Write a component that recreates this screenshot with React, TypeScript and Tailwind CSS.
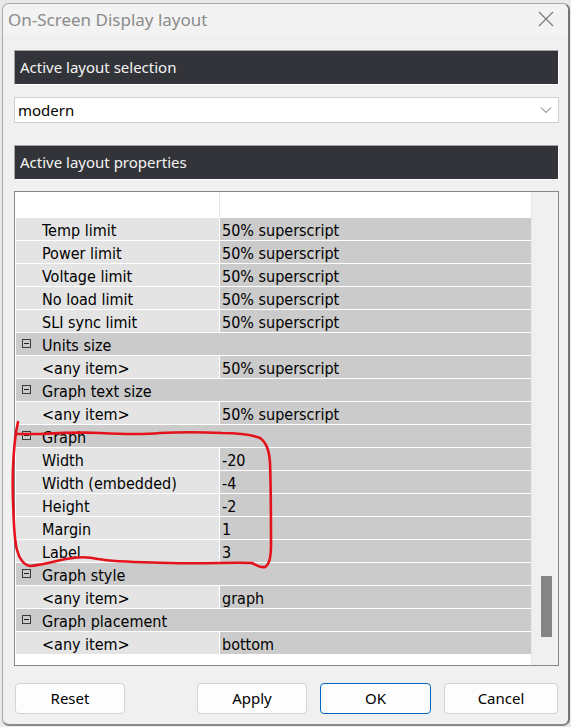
import React from "react";

type Row =
  | { kind: "group"; label: string }
  | { kind: "item"; label: string; value: string };

const rows: Row[] = [
  { kind: "item", label: "Temp limit", value: "50% superscript" },
  { kind: "item", label: "Power limit", value: "50% superscript" },
  { kind: "item", label: "Voltage limit", value: "50% superscript" },
  { kind: "item", label: "No load limit", value: "50% superscript" },
  { kind: "item", label: "SLI sync limit", value: "50% superscript" },
  { kind: "group", label: "Units size" },
  { kind: "item", label: "<any item>", value: "50% superscript" },
  { kind: "group", label: "Graph text size" },
  { kind: "item", label: "<any item>", value: "50% superscript" },
  { kind: "group", label: "Graph" },
  { kind: "item", label: "Width", value: "-20" },
  { kind: "item", label: "Width (embedded)", value: "-4" },
  { kind: "item", label: "Height", value: "-2" },
  { kind: "item", label: "Margin", value: "1" },
  { kind: "item", label: "Label", value: "3" },
  { kind: "group", label: "Graph style" },
  { kind: "item", label: "<any item>", value: "graph" },
  { kind: "group", label: "Graph placement" },
  { kind: "item", label: "<any item>", value: "bottom" },
];

const uiFont = { fontFamily: '"Noto Sans", "Open Sans", sans-serif' };
const gridFont = {
  fontFamily: '"DejaVu Sans Condensed", "DejaVu Sans", sans-serif',
  fontStretch: "condensed" as const,
};

function SectionBar({ title }: { title: string }) {
  return (
    <div className="ml-[11px] w-[545px] h-[35px] flex items-center pl-[5px] bg-[#333439] border-t border-l border-[#a3a3a3] border-r border-r-white border-b border-b-white">
      <span className="text-[15px] text-[#f4f4f4]" style={uiFont}>
        {title}
      </span>
    </div>
  );
}

function MinusBox() {
  return (
    <span className="w-[9px] h-[9px] border border-[#3a3a3a] flex items-center justify-center">
      <span className="w-[5px] h-[1px] bg-[#222]" />
    </span>
  );
}

function Button({ label, primary, w }: { label: string; primary?: boolean; w: string }) {
  return (
    <button
      className={`${w} h-[31px] rounded-[4px] bg-[#fdfdfd] text-[15px] text-black flex items-center justify-center ${
        primary ? "border border-[#0067c0]" : "border border-[#d3d3d3]"
      }`}
      style={uiFont}
    >
      {label}
    </button>
  );
}

export default function App() {
  return (
    <div className="w-[571px] h-[727px] relative overflow-hidden bg-[#e9e9e9] pt-[3px] pl-[2px] pr-[1px] pb-[1px]">
      <div className="h-full flex flex-col bg-[#f0f0f0] rounded-[7px] border-l border-t border-[#a9a9a9] border-r-[2px] border-b-[2px] border-r-[#747474] border-b-[#8a8a8a]">
        {/* title bar */}
        <div className="h-[31px] flex items-center justify-between pl-[5px] pr-[14px] bg-[#f3f3f3] rounded-t-[7px]">
          <span className="text-[17px] text-[#8b8b8b]" style={uiFont}>
            On-Screen Display layout
          </span>
          <svg width="16" height="16" viewBox="0 0 16 16" className="mt-[-1px]">
            <path d="M1 1 L15 15 M15 1 L1 15" stroke="#7a7a7a" strokeWidth="1.2" fill="none" />
          </svg>
        </div>

        <div className="mt-[15px]">
          <SectionBar title="Active layout selection" />
        </div>

        {/* combo */}
        <div className="mt-[12px] ml-[11px] w-[545px] h-[26px] bg-white border border-[#cfcfcf] flex items-center justify-between pl-[3px] pr-[6px]">
          <span className="text-[15px] text-black" style={uiFont}>
            modern
          </span>
          <svg width="12" height="8" viewBox="0 0 12 8">
            <path d="M1 1.5 L6 6.5 L11 1.5" stroke="#666" strokeWidth="1" fill="none" />
          </svg>
        </div>

        <div className="mt-[22px]">
          <SectionBar title="Active layout properties" />
        </div>

        {/* property grid */}
        <div className="mt-[11px] ml-[11px] w-[545px] h-[475px] border border-[#838790] bg-white flex">
          <div className="w-[516px] pl-[1px] flex flex-col" style={gridFont}>
            <div className="h-[26px] flex">
              <div className="w-[203px]" />
              <div className="w-[1px] bg-[#e6e6e6]" />
            </div>
            {rows.map((r, i) =>
              r.kind === "group" ? (
                <div key={i} className="h-[22px] mb-[1px] bg-[#cbcbcb] flex items-start pt-[5px]">
                  <span className="ml-[6px] mr-[11px] mt-[1px]">
                    <MinusBox />
                  </span>
                  <span className="text-[16px] text-black leading-none">{r.label}</span>
                </div>
              ) : (
                <div key={i} className="h-[22px] mb-[1px] flex">
                  <div className="w-[203px] bg-[#e4e4e4] flex items-start pt-[5px] pl-[26px]">
                    <span className="text-[16px] text-black leading-none">{r.label}</span>
                  </div>
                  <div className="w-[1px] bg-white" />
                  <div className="flex-1 bg-[#cbcbcb] flex items-start pt-[5px] pl-[2px]">
                    <span className="text-[16px] text-black leading-none">{r.value}</span>
                  </div>
                </div>
              )
            )}
          </div>
          <div className="w-[1px] bg-[#e8e8e8]" />
          {/* scrollbar */}
          <div className="flex-1 bg-[#f0f0f0] flex flex-col items-center">
            <div className="mt-[384px] w-[11px] h-[61px] bg-[#858585] ml-[2px]" />
          </div>
        </div>

        {/* buttons */}
        <div className="mt-[17px] ml-[12px] w-[543px] flex justify-between">
          <Button label="Reset" w="w-[110px]" />
          <div className="flex gap-[13px]">
            <Button label="Apply" w="w-[110px]" />
            <Button label="OK" primary w="w-[111px]" />
            <Button label="Cancel" w="w-[114px]" />
          </div>
        </div>
      </div>

      {/* hand-drawn annotation */}
      <svg className="absolute left-0 top-0 pointer-events-none" width="571" height="727" viewBox="0 0 571 727">
        <path
          d="M18 422 L16 432 C14 447 12 470 13 500 C14 525 14 540 17 550 C19 558 24 566 31 566 C42 565 52 562 66 559 C76 557 86 556 98 559 C115 562 135 562 170 563 C205 564 235 562 252 563 C256 565 260 568 265 567 C269 565 271 558 271 545 C271 520 271 490 270 462 C269 451 267 443 260 438 C250 434 240 433 222 433 C200 432 180 432 160 433 C140 435 120 434 100 433 C80 432 60 433 40 434 C30 434 22 434 16 434"
          stroke="#e3121b"
          strokeWidth="2.6"
          fill="none"
          strokeLinecap="round"
          strokeLinejoin="round"
        />
      </svg>
    </div>
  );
}
